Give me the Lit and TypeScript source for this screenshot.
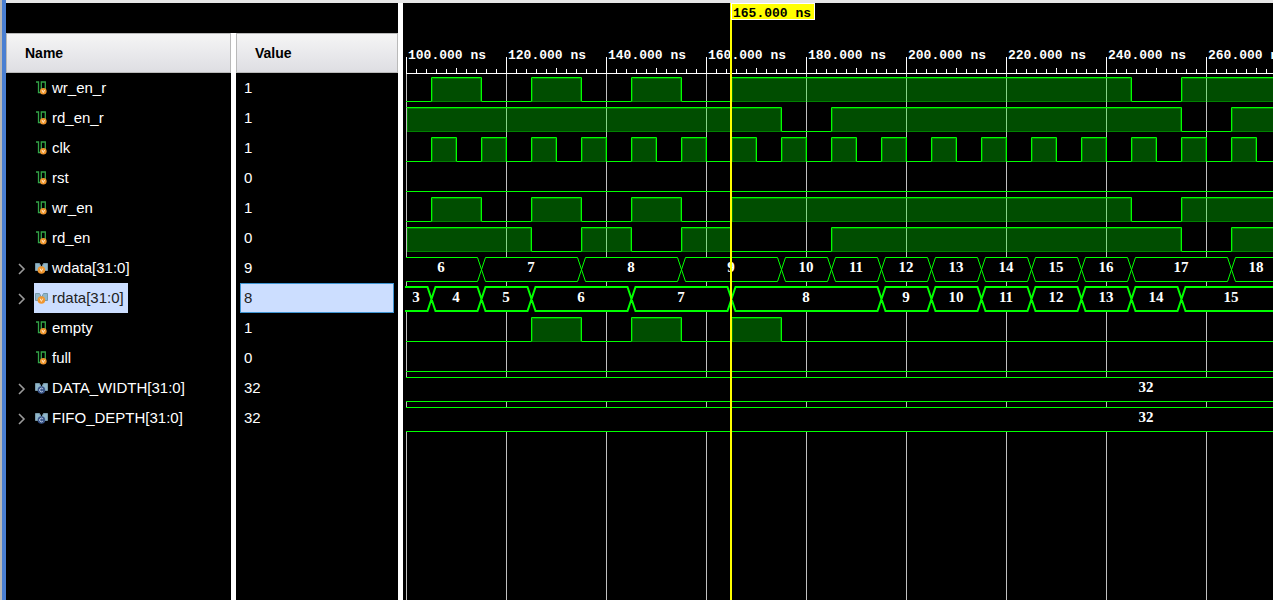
import { LitElement, html, svg, css } from "lit";
import { customElement, property, state } from "lit/decorators.js";
import { classMap } from "lit/directives/class-map.js";

type Interval = [number, number];
interface Signal {
  name: string;
  value: string;
  kind: "scalar" | "bus" | "param";
  high?: Interval[];
  steps?: [number, string][];
}

const PX_PER_NS = 5;
const FIRST = 100;
const VIEW_START = 99;
const VIEW_END = 275;
const FAR = 900;
const ROW = 30;
const RULER_Y = 70;
const ORIGIN_X = 3;

const clock: Interval[] = [];
for (let t = 105; t < VIEW_END; t += 10) clock.push([t, t + 5]);

const wrEnable: Interval[] = [[105, 115], [125, 135], [145, 155], [165, 245], [255, FAR]];

const SIGNALS: Signal[] = [
  { name: "wr_en_r", value: "1", kind: "scalar", high: wrEnable },
  { name: "rd_en_r", value: "1", kind: "scalar", high: [[100, 175], [185, 255], [265, FAR]] },
  { name: "clk", value: "1", kind: "scalar", high: clock },
  { name: "rst", value: "0", kind: "scalar", high: [] },
  { name: "wr_en", value: "1", kind: "scalar", high: wrEnable },
  { name: "rd_en", value: "0", kind: "scalar", high: [[100, 125], [135, 145], [155, 165], [185, 255], [265, FAR]] },
  {
    name: "wdata[31:0]", value: "9", kind: "bus",
    steps: [[VIEW_START, "6"], [115, "7"], [135, "8"], [155, "9"], [175, "10"], [185, "11"], [195, "12"],
      [205, "13"], [215, "14"], [225, "15"], [235, "16"], [245, "17"], [265, "18"]],
  },
  {
    name: "rdata[31:0]", value: "8", kind: "bus",
    steps: [[VIEW_START, "3"], [105, "4"], [115, "5"], [125, "6"], [145, "7"], [165, "8"], [195, "9"],
      [205, "10"], [215, "11"], [225, "12"], [235, "13"], [245, "14"], [255, "15"]],
  },
  { name: "empty", value: "1", kind: "scalar", high: [[125, 135], [145, 155], [165, 175]] },
  { name: "full", value: "0", kind: "scalar", high: [] },
  { name: "DATA_WIDTH[31:0]", value: "32", kind: "param", steps: [[221, "32"]] },
  { name: "FIFO_DEPTH[31:0]", value: "32", kind: "param", steps: [[221, "32"]] },
];

const xAt = (t: number) => ORIGIN_X + (t - FIRST) * PX_PER_NS;

@customElement("signal-icon")
export class SignalIcon extends LitElement {
  @property() kind = "scalar";

  static styles = css`
    :host { display: block; width: 14px; height: 14px; flex: none; }
    svg { display: block; }
  `;

  render() {
    if (this.kind === "scalar") {
      return html`<svg width="14" height="14" viewBox="0 0 14 14" aria-hidden="true">
        <path d="M1 1H3.5V11.5H6.3V1H10.3V8" fill="none" stroke="#33a447" stroke-width="1.3" />
        <circle cx="8.3" cy="10.3" r="3.3" fill="#f0962e" />
        <path d="M7 9L8.3 11.6L9.6 9" fill="none" stroke="#ffe9cc" />
      </svg>`;
    }
    const param = this.kind === "param";
    return html`<svg width="14" height="14" viewBox="0 0 14 14" aria-hidden="true">
      <path d="M0.5 2.5H4.5L6.5 6.5L8.5 2.5H12.5V9.5H8.5L6.5 7.5L4.5 9.5H0.5Z" fill="#8fb6c9" stroke="#7899a9" />
      <circle cx="6.4" cy="9" r="3.8" fill=${param ? "#3a5689" : "#f0962e"} />
      ${param
        ? svg`<path d="M7.8 7.8A1.8 1.8 0 1 0 7.8 10.2" fill="none" stroke="#c9d6ee" />`
        : svg`<path d="M5.1 7.6L6.4 10.4L7.7 7.6" fill="none" stroke="#ffe9cc" />`}
    </svg>`;
  }
}

@customElement("wave-canvas")
export class WaveCanvas extends LitElement {
  @property({ type: Number }) selected = -1;
  @state() private span = 0;

  static styles = css`
    :host { display: block; min-width: 0; overflow: hidden; background: #000; }
    svg { display: block; width: 100%; height: 100%; }
    .ruler { stroke: #fff; }
    .grid { stroke: #c0c0c0; }
    .trace { stroke: #00ff00; fill: none; }
    .strong { stroke-width: 2; }
    .mask { fill: #000; }
    .level { fill: rgb(0 255 0 / 0.3); }
    .inner { fill: none; stroke: rgb(0 255 0 / 0.3); }
    .time { font: bold 13px "Liberation Mono", monospace; fill: #fff; white-space: pre; }
    .dark { fill: #000; }
    .bus { font: bold 15px "Liberation Serif", serif; fill: #fff; text-anchor: middle; }
    .cursor { fill: #ff0; }
    .flag { fill: #ff0; stroke: #fff; }
  `;

  private observer = new ResizeObserver(([entry]) => {
    this.span = entry.contentRect.width;
  });

  connectedCallback() {
    super.connectedCallback();
    this.observer.observe(this);
  }

  disconnectedCallback() {
    this.observer.disconnect();
    super.disconnectedCallback();
  }

  firstUpdated() {
    this.span = this.getBoundingClientRect().width;
  }

  private ruler() {
    const parts = [];
    for (let t = FIRST; xAt(t) < this.span; t += 2) {
      const x = xAt(t) + 0.5;
      const top = t % 20 === 0 ? 54 : t % 10 === 0 ? 65 : 66;
      parts.push(svg`<line class="ruler" x1=${x} x2=${x} y1=${top} y2=${RULER_Y} />`);
      if (t % 20 === 0) {
        parts.push(svg`<line class="grid" x1=${x} x2=${x} y1=${RULER_Y} y2="100%" />
          <text class="time" x=${x + 1.5} y="56">${t}.000 ns</text>`);
      }
    }
    return svg`${parts}<line class="ruler" x1=${ORIGIN_X} x2="100%" y1="70.5" y2="70.5" />`;
  }

  private scalar(s: Signal, high: number, low: number) {
    let d = `M${ORIGIN_X} ${low + 0.5}`;
    const fills = (s.high ?? []).map(([a, b]) => {
      const x1 = xAt(a) + 0.5;
      const x2 = xAt(b) + 0.5;
      d += a === FIRST ? `M${x1} ${high + 0.5}` : `H${x1}V${high + 0.5}`;
      d += `H${x2}V${low + 0.5}`;
      return svg`<rect class="level" x=${x1 + 0.5} y=${high + 1} width=${x2 - x1 - 1} height=${low - high} />
        <rect class="inner" x=${x1 + 1} y=${high + 1.5} width=${x2 - x1 - 2} height=${low - high - 1} />`;
    });
    d += `H${xAt(FAR)}`;
    // The baseline stays dim beneath a high level, so only low stretches are stroked.
    return svg`${fills}<path class="trace" d=${d} />`;
  }

  private bus(s: Signal, high: number, low: number, strong: boolean) {
    const steps = s.steps ?? [];
    const o = strong ? 0 : 0.5;
    const top = high + o;
    const bottom = low + o;
    const start = strong ? ORIGIN_X - 1 : ORIGIN_X;
    let upper = `M${start} ${top}`;
    let lower = `M${start} ${bottom}`;
    let swap = false;
    for (const [t] of steps.slice(1)) {
      const x = xAt(t) + 0.5;
      const a = swap ? bottom : top;
      const b = swap ? top : bottom;
      upper += `L${x - 4} ${a}L${x + 4} ${b}`;
      lower += `L${x - 4} ${b}L${x + 4} ${a}`;
      swap = !swap;
    }
    upper += `H${xAt(FAR)}`;
    lower += `H${xAt(FAR)}`;
    return svg`<rect class="mask" x="0" y=${high} width="100%" height=${low - high} />
      <path class=${strong ? "trace strong" : "trace"} d=${upper + lower} />
      ${steps.map(([t, label], i) => {
        const end = steps[i + 1]?.[0] ?? VIEW_END;
        return svg`<text class="bus" x=${(xAt(t) + xAt(end)) / 2} y=${low - 9}>${label}</text>`;
      })}`;
  }

  render() {
    const cursor = xAt(165) - 1;
    return html`<svg role="img" aria-label="Waveforms">
      ${this.ruler()}
      ${SIGNALS.map((s, i) => {
        const low = 98 + i * ROW;
        const high = low - 24;
        return s.kind === "scalar" ? this.scalar(s, high, low) : this.bus(s, high, low, i === this.selected);
      })}
      ${svg`<rect class="cursor" x=${cursor} y="0" width="2" height="100%" />
        <rect class="flag" x=${cursor + 1.5} y="0.5" width="83" height="16" />
        <text class="time dark" x=${cursor + 3} y="14">165.000 ns</text>`}
    </svg>`;
  }
}

@customElement("app-root")
export class AppRoot extends LitElement {
  @state() private selected = 7;

  static styles = css`
    :host {
      display: flex;
      height: 100vh;
      background: #000;
      font: 15px/30px "Liberation Sans", Arial, sans-serif;
      color: #fff;
      overflow: hidden;
    }
    .edge { flex: none; width: 4px; background: #4a7fd2; border-left: 2px solid #b8b8b8; }
    .window { flex: 1; min-width: 0; display: flex; border-top: 3px solid #e6e6e6; }
    .signals {
      flex: none;
      width: 392px;
      padding-top: 30px;
      border-right: 5px solid #fff;
    }
    wave-canvas { flex: 1; }
    table { width: 100%; height: 100%; table-layout: fixed; border-collapse: separate; border-spacing: 0; }
    .name-col { width: 225px; }
    th, td { padding: 0; text-align: left; height: 30px; }
    th:last-child, td:last-child { border-left: 5px solid #fff; }
    th { height: 40px; }
    .head {
      box-sizing: border-box;
      height: 40px;
      padding-left: 18px;
      border: 1px solid #b9b9b9;
      background: linear-gradient(#f5f5f5, #dedee3);
      color: #000;
      font-size: 14px;
      font-weight: bold;
      line-height: 38px;
    }
    .row { display: flex; height: 30px; padding-left: 12px; }
    .toggle { width: 16px; height: 30px; padding: 0; border: 0; background: none; }
    .toggle svg { display: block; }
    .spacer { width: 16px; }
    .label { display: flex; align-items: center; gap: 3px; padding-right: 4px; padding-left: 1px; cursor: default; }
    .value { box-sizing: border-box; height: 30px; margin: 0 4px; padding-left: 4px; }
    .selected .label { background: #ccdeff; color: #222; }
    .selected .value { background: #ccdeff; border: 1px solid #3f95d3; color: #222; line-height: 28px; padding-left: 3px; }
    .filler td { height: auto; }
  `;

  render() {
    return html`
      <div class="edge"></div>
      <main class="window">
        <section class="signals">
          <table>
            <colgroup><col class="name-col" /><col /></colgroup>
            <thead>
              <tr>
                <th scope="col"><div class="head">Name</div></th>
                <th scope="col"><div class="head">Value</div></th>
              </tr>
            </thead>
            <tbody>
              ${SIGNALS.map((s, i) => html`
                <tr class=${classMap({ selected: i === this.selected })} @click=${() => (this.selected = i)}>
                  <td>
                    <div class="row">
                      ${s.kind === "scalar"
                        ? html`<span class="spacer"></span>`
                        : html`<button class="toggle" aria-label="Expand ${s.name}">
                            <svg width="9" height="14" viewBox="0 0 9 14">
                              <path d="M1 3L6 8L1 13" fill="none" stroke="#9a9a9a" stroke-width="1.6" />
                            </svg>
                          </button>`}
                      <span class="label"><signal-icon kind=${s.kind}></signal-icon>${s.name}</span>
                    </div>
                  </td>
                  <td><div class="value">${s.value}</div></td>
                </tr>`)}
              <tr class="filler"><td></td><td></td></tr>
            </tbody>
          </table>
        </section>
        <wave-canvas .selected=${this.selected}></wave-canvas>
      </main>
    `;
  }
}
